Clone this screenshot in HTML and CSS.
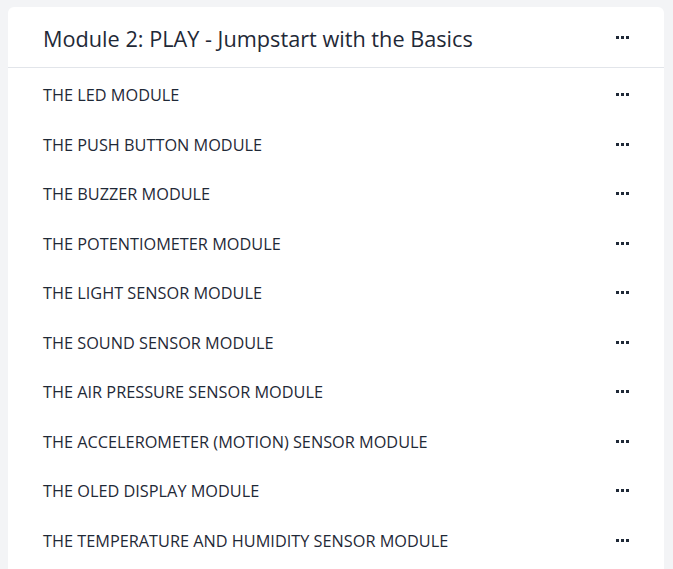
FILE: index.html
```html
<!DOCTYPE html>
<html>
<head>
<meta charset="utf-8">
<link rel="stylesheet" href="styles.css">
</head>
<body>
<div class="card">
  <div class="card-header">
    <h2 class="title">Module 2: PLAY - Jumpstart with the Basics</h2>
    <span class="dots"><i></i><i></i><i></i></span>
  </div>
  <ul class="list">
    <li class="row"><span>THE LED MODULE</span><span class="dots"><i></i><i></i><i></i></span></li>
    <li class="row"><span>THE PUSH BUTTON MODULE</span><span class="dots"><i></i><i></i><i></i></span></li>
    <li class="row"><span>THE BUZZER MODULE</span><span class="dots"><i></i><i></i><i></i></span></li>
    <li class="row"><span>THE POTENTIOMETER MODULE</span><span class="dots"><i></i><i></i><i></i></span></li>
    <li class="row"><span>THE LIGHT SENSOR MODULE</span><span class="dots"><i></i><i></i><i></i></span></li>
    <li class="row"><span>THE SOUND SENSOR MODULE</span><span class="dots"><i></i><i></i><i></i></span></li>
    <li class="row"><span>THE AIR PRESSURE SENSOR MODULE</span><span class="dots"><i></i><i></i><i></i></span></li>
    <li class="row"><span>THE ACCELEROMETER (MOTION) SENSOR MODULE</span><span class="dots"><i></i><i></i><i></i></span></li>
    <li class="row"><span>THE OLED DISPLAY MODULE</span><span class="dots"><i></i><i></i><i></i></span></li>
    <li class="row"><span>THE TEMPERATURE AND HUMIDITY SENSOR MODULE</span><span class="dots"><i></i><i></i><i></i></span></li>
  </ul>
</div>
</body>
</html>
```
FILE: styles.css
```css
html, body { margin: 0; padding: 0; }
body {
  background: #f3f4f6;
  font-family: "Open Sans", "Noto Sans", sans-serif;
  color: #1f2937;
  padding: 7px 9px 0 8px;
  overflow: hidden;
  height: 569px;
  box-sizing: border-box;
}
.card {
  background: #fff;
  border-radius: 6px 6px 0 0;
  height: 100%;
}
.card-header {
  display: flex;
  align-items: center;
  justify-content: space-between;
  height: 60px;
  padding: 0 35px;
  border-bottom: 1px solid #e2e5ea;
}
.title {
  margin: 0;
  font-size: 21.7px;
  font-weight: 400;
  line-height: 1;
  padding-top: 4px;
}
.list {
  list-style: none;
  margin: 0;
  padding: 2px 0 0;
}
.row {
  display: flex;
  align-items: center;
  justify-content: space-between;
  height: 49.5px;
  padding: 0 35px;
  font-size: 16.3px;
}
.row span:first-child {
  padding-top: 1px;
}
.dots {
  display: flex;
  gap: 2px;
}
.dots i {
  width: 3px;
  height: 3px;
  background: #1f2937;
}
```
